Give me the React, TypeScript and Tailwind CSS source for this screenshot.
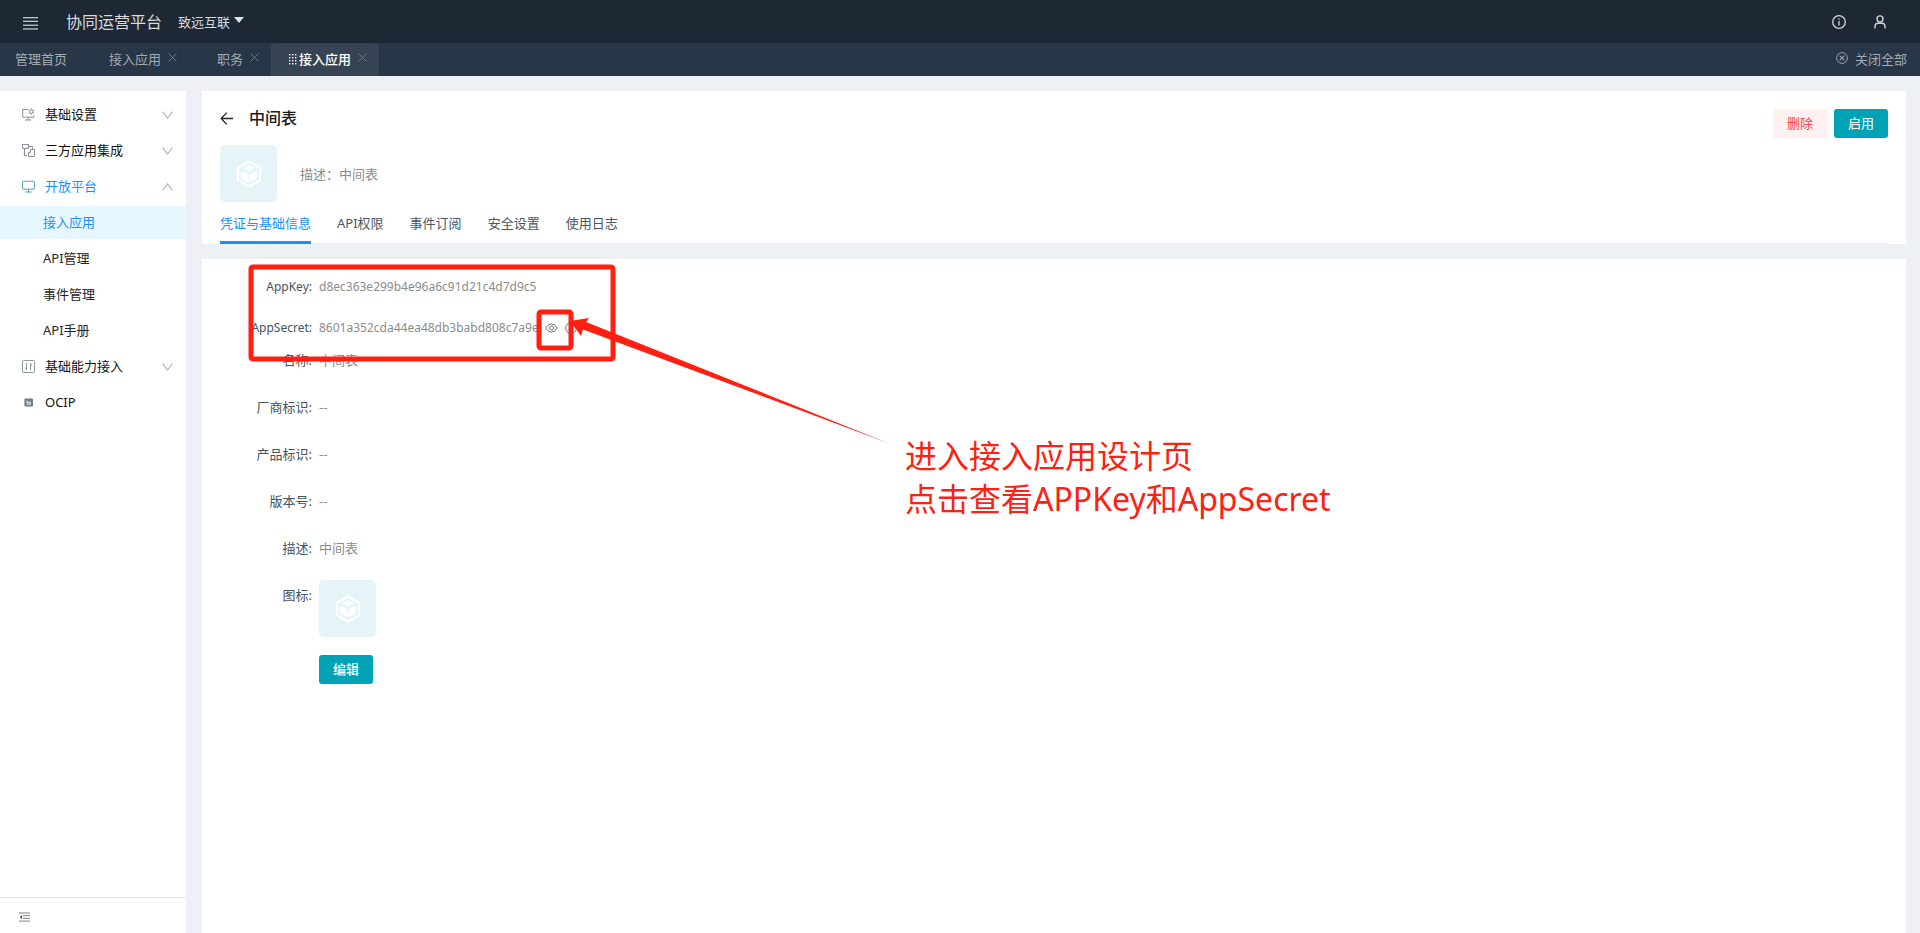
import React from "react";

type IconProps = { className?: string };

const MenuLines = () => (
  <svg viewBox="0 0 15 13" className="h-[13px] w-[15px]" fill="#c5c9ce">
    <rect x="0" y="0" width="15" height="1.3" />
    <rect x="0" y="3.7" width="15" height="1.3" />
    <rect x="0" y="7.6" width="15" height="1.3" />
    <rect x="0" y="11.3" width="15" height="1.3" />
  </svg>
);

const Close = () => (
  <svg viewBox="0 0 9 9" className="h-[9px] w-[9px]" stroke="#6b7682" fill="none">
    <path d="M0.5 0.5 8.5 8.5M8.5 0.5 0.5 8.5" />
  </svg>
);

const Dots = () => (
  <svg viewBox="0 0 8 11" className="h-[11px] w-2" fill="#ffffff">
    {[0, 3, 6, 9].map((y) => (
      <React.Fragment key={y}>
        <rect x="0" y={y} width="1.4" height="1.4" />
        <rect x="3" y={y} width="1.4" height="1.4" />
        <rect x="6" y={y} width="1.4" height="1.4" />
      </React.Fragment>
    ))}
  </svg>
);

const Info = ({ className }: IconProps) => (
  <svg viewBox="0 0 14 14" className={className} fill="none" stroke="currentColor" strokeWidth="1.3">
    <circle cx="7" cy="7" r="6.3" />
    <path d="M7 5.9V10.6" />
    <path d="M7 3.4V4.8" />
  </svg>
);

const User = () => (
  <svg viewBox="0 0 12 14" className="h-[14px] w-3" fill="none" stroke="#d2d4d7" strokeWidth="1.4">
    <circle cx="6" cy="3.9" r="3" />
    <path d="M1 13.6V11.4Q1 8.3 4 8.3H8Q11 8.3 11 11.4V13.6" />
  </svg>
);

const CircleX = () => (
  <svg viewBox="0 0 12 12" className="h-3 w-3" fill="none" stroke="#9aa2ab">
    <circle cx="6" cy="6" r="5.4" />
    <path d="M3.6 3.6 8.4 8.4M8.4 3.6 3.6 8.4" strokeWidth="1.2" />
  </svg>
);

const Chevron = ({ up }: { up?: boolean }) => (
  <svg viewBox="0 0 11 8" className="h-2 w-[11px]" fill="none" stroke="#b3b7bd" strokeWidth="1.2">
    <path d={up ? "M0.6 7.3 5.5 1 10.4 7.3" : "M0.6 0.7 5.5 7 10.4 0.7"} />
  </svg>
);

const iconClass = "h-[13px] w-[13px]";

const SettingsIcon = () => (
  <svg viewBox="0 0 13 13" className={iconClass} fill="none" stroke="#8a8f99">
    <path d="M6 1.5H0.7V9.2H11.8V7.6M6.2 9.2V11.8M3 12H9.5" />
    <circle cx="9.3" cy="3.6" r="1.8" />
    <path d="M9.3 0.4V1.8M9.3 5.4V6.8M6.5 2 7.7 2.7M10.9 4.5 12.1 5.2M6.5 5.2 7.7 4.5M10.9 2.7 12.1 2" />
  </svg>
);

const IntegrationIcon = () => (
  <svg viewBox="0 0 13 13" className={iconClass} fill="none" stroke="#8a8f99">
    <path d="M0.5 0.5H6.5V4.5H0.5ZM6.5 2.5H10.5V5M2.5 4.5V11.5H5M1.5 10H3.5" />
    <path d="M6.5 12.5V8.5H8.5V5.5H12.5V12.5Z" />
  </svg>
);

const MonitorIcon = () => (
  <svg viewBox="0 0 13 13" className={iconClass} fill="none" stroke="#4f9fb8">
    <rect x="0.6" y="1.2" width="11.8" height="8" rx="0.6" />
    <path d="M6.5 9.2V11.8M3.2 12H9.8" />
  </svg>
);

const SlidersIcon = () => (
  <svg viewBox="0 0 13 13" className={iconClass} fill="none" stroke="#9298a1">
    <rect x="0.5" y="0.5" width="12" height="12" rx="0.8" />
    <path d="M4.5 3V9.6M3.2 7.6 4.5 9.6M8.5 10V3.4M8.5 3.4 9.9 5.6" />
  </svg>
);

const OcipIcon = () => (
  <svg viewBox="0 0 13 13" className={iconClass}>
    <rect x="2.4" y="2.4" width="8.6" height="8.2" rx="1" fill="#727b87" />
    <path d="M5.2 4.6V8.2H8.4V6.2H5.4" fill="none" stroke="#ffffff" strokeWidth="0.9" />
  </svg>
);

const CollapseIcon = () => (
  <svg viewBox="0 0 11 10" className="h-[10px] w-[11px]" fill="none" stroke="#85858a">
    <path d="M0 1H11M4 3.7H11M4 6.4H11M0 9.1H11" />
    <path d="M3 3.2V6.9L0.8 5Z" fill="#3f4650" stroke="none" />
  </svg>
);

const CubeTile = () => (
  <div className="flex h-[57px] w-[57px] items-center justify-center rounded-[5px] bg-[#e4f4f7]">
    <svg viewBox="0 0 26 28" className="h-7 w-[26px]">
      <path d="M13 1.5 24 7.8V20.2L13 26.5 2 20.2V7.8Z" fill="none" stroke="#ffffff" strokeWidth="2.2" strokeLinejoin="round" />
      <path d="M13 5.4 17.8 8.3 13 11.2 8.2 8.3Z" fill="#ffffff" stroke="#ffffff" strokeLinejoin="round" />
      <path d="M5.4 11 12.2 14.4V21.8L5.4 18.4Z" fill="#ffffff" stroke="#ffffff" strokeWidth="0.6" strokeLinejoin="round" />
      <path d="M20.6 11 13.8 14.4V21.8L20.6 18.4Z" fill="#ffffff" stroke="#ffffff" strokeWidth="0.6" strokeLinejoin="round" />
    </svg>
  </div>
);

const PageTab = ({ label, active }: { label: string; active?: boolean }) => (
  <div className={active ? "flex items-center rounded-t-sm bg-[#354353] pr-3 pl-[18px] text-white" : "flex items-center pr-3 pl-[18px]"}>
    <span className="flex w-[10px] shrink-0 items-center">{active && <Dots />}</span>
    <a href="#" className={active ? "pb-0.5 font-medium" : "pb-0.5"}>{label}</a>
    <button type="button" aria-label="关闭" className="ml-[7px] pb-1">
      <Close />
    </button>
  </div>
);

const MenuItem = ({ icon, label, open, leaf }: { icon: React.ReactNode; label: string; open?: boolean; leaf?: boolean }) => (
  <a href="#" className={open ? "flex h-[33px] items-center pr-[13px] pl-[22px] text-[#1890ff]" : "flex h-[33px] items-center pr-[13px] pl-[22px] text-[#111111]"}>
    {icon}
    <span className="ml-[10px] flex-1 pb-0.5">{label}</span>
    {!leaf && <Chevron up={open} />}
  </a>
);

const SubItem = ({ label, active }: { label: string; active?: boolean }) => (
  <a href="#" className={active ? "flex h-[33px] items-center bg-[#e6f7ff] pb-0.5 pl-[43px] text-[#1890ff]" : "flex h-[33px] items-center pb-0.5 pl-[43px] text-[#262626]"}>
    {label}
  </a>
);

const Field = ({ label, gap, small, children }: { label: string; gap: string; small?: boolean; children: React.ReactNode }) => (
  <div className={"flex items-start " + gap}>
    <dt className={"flex h-[29px] w-[117px] shrink-0 items-center justify-end pr-[7px] text-[#46525f] " + (small ? "text-xs" : "")}>{label}:</dt>
    <dd className={"flex min-h-[29px] items-center text-[#8c8c8c] " + (small ? "text-xs" : "")}>{children}</dd>
  </div>
);

const tabs = ["凭证与基础信息", "API权限", "事件订阅", "安全设置", "使用日志"];

export default function App() {
  return (
    <div className="relative flex min-h-screen flex-col overflow-hidden bg-[#edf1f5] font-['Noto_Sans','Noto_Sans_CJK_SC',sans-serif] text-[13px] leading-5">
      <header className="flex h-[43px] items-center bg-[#1d2834] pr-[34px] pl-[23px] text-[#d8dbde]">
        <button type="button" aria-label="菜单" className="pt-[3px]">
          <MenuLines />
        </button>
        <h1 className="ml-7 text-base">协同运营平台</h1>
        <button type="button" className="ml-4 flex items-center gap-1">
          致远互联
          <svg viewBox="0 0 10 6" className="mb-1 h-[6px] w-[10px]" fill="#e0e2e4">
            <path d="M0 0H10L5 6Z" />
          </svg>
        </button>
        <div className="ml-auto flex items-center gap-7">
          <button type="button" aria-label="信息">
            <Info className="h-[14px] w-[14px] text-[#d2d4d7]" />
          </button>
          <button type="button" aria-label="用户">
            <User />
          </button>
        </div>
      </header>

      <nav className="flex h-[33px] items-stretch bg-[#283747] pr-[13px] text-[#a3abb4]">
        <a href="#" className="flex items-center pr-[14px] pb-0.5 pl-[15px]">管理首页</a>
        <PageTab label="接入应用" />
        <PageTab label="职务" />
        <PageTab label="接入应用" active />
        <button type="button" className="ml-auto flex items-center gap-[7px]">
          <span className="pb-1">
            <CircleX />
          </span>
          <span className="pb-0.5">关闭全部</span>
        </button>
      </nav>

      <div className="flex flex-1 gap-4 pt-[15px]">
        <aside className="flex w-[186px] shrink-0 flex-col bg-white">
          <nav className="flex flex-1 flex-col gap-[3px] pt-[7px]">
            <MenuItem icon={<SettingsIcon />} label="基础设置" />
            <MenuItem icon={<IntegrationIcon />} label="三方应用集成" />
            <MenuItem icon={<MonitorIcon />} label="开放平台" open />
            <SubItem label="接入应用" active />
            <SubItem label="API管理" />
            <SubItem label="事件管理" />
            <SubItem label="API手册" />
            <MenuItem icon={<SlidersIcon />} label="基础能力接入" />
            <MenuItem icon={<OcipIcon />} label="OCIP" leaf />
          </nav>
          <div className="flex h-9 items-center border-t border-[#e2e2e2] pt-0.5 pl-[19px]">
            <button type="button" aria-label="收起">
              <CollapseIcon />
            </button>
          </div>
        </aside>

        <main className="mr-[14px] flex flex-1 flex-col gap-[15px]">
          <section className="bg-white px-[18px]">
            <div className="flex items-start justify-between">
              <div className="flex h-[54px] items-center">
                <button type="button" aria-label="返回">
                  <svg viewBox="0 0 13 13" className="h-[13px] w-[13px]" fill="none" stroke="#262626" strokeWidth="1.3">
                    <path d="M13 6.5H1.2M6.8 0.6 1.2 6.5 6.8 12.4" />
                  </svg>
                </button>
                <h2 className="ml-4 text-base font-medium text-[#1a1a1a]">中间表</h2>
              </div>
              <div className="flex gap-[7px] pt-[18px]">
                <button type="button" className="h-[29px] w-[54px] rounded-[3px] bg-[#fff1f0] pb-0.5 text-[#f5464e]">删除</button>
                <button type="button" className="h-[29px] w-[54px] rounded-[3px] bg-[#00a2b6] pb-0.5 text-white">启用</button>
              </div>
            </div>
            <div className="flex items-center gap-[23px]">
              <CubeTile />
              <p className="text-[#8c8c8c]">描述：中间表</p>
            </div>
            <div className="flex h-[42px] gap-[26px] border-b border-[#edf1f5] pt-[11px] text-[#4b5663]">
              {tabs.map((t, i) => (
                <a key={t} href="#" className={i === 0 ? "h-[31px] border-b-3 border-[#1890ff] text-[#1890ff]" : "h-[31px]"}>
                  {t}
                </a>
              ))}
            </div>
          </section>

          <section className="flex-1 bg-white pt-[13px]">
            <dl>
              <Field label="AppKey" gap="mb-3" small>
                d8ec363e299b4e96a6c91d21c4d7d9c5
              </Field>
              <Field label="AppSecret" gap="mb-[3px]" small>
                8601a352cda44ea48db3babd808c7a9e
                <button type="button" aria-label="查看" className="ml-[6px]">
                  <svg viewBox="0 0 13 10" className="h-[10px] w-[13px]" fill="none" stroke="#6f7276">
                    <path d="M0.6 5Q3 0.9 6.5 0.9T12.4 5Q10 9.1 6.5 9.1T0.6 5Z" />
                    <circle cx="6.5" cy="5" r="2" />
                  </svg>
                </button>
                <button type="button" aria-label="说明" className="ml-[7px]">
                  <Info className="h-3 w-3 text-[#8c8c8c]" />
                </button>
              </Field>
              <Field label="名称" gap="mb-[18px]">中间表</Field>
              <Field label="厂商标识" gap="mb-[18px]">--</Field>
              <Field label="产品标识" gap="mb-[18px]">--</Field>
              <Field label="版本号" gap="mb-[18px]">--</Field>
              <Field label="描述" gap="mb-[18px]">中间表</Field>
              <Field label="图标" gap="mb-[18px]">
                <CubeTile />
              </Field>
            </dl>
            <button type="button" className="ml-[117px] h-[29px] w-[54px] rounded-[3px] bg-[#00a2b6] pb-0.5 font-medium text-white">编辑</button>
          </section>
        </main>
      </div>

      <svg viewBox="0 0 660 200" className="pointer-events-none absolute top-[261px] left-[240px] h-[200px] w-[660px]" fill="none" stroke="#ff2012" strokeWidth="5">
        <rect x="11" y="6" width="362" height="92" rx="2" />
        <rect x="299" y="51" width="32" height="36" rx="2" />
        <path d="M330 60 349 57 346 61 648 182 343 68.5 341 75Z" fill="#ff2012" stroke="none" />
      </svg>
      <p className="pointer-events-none absolute top-[434px] left-[905px] text-[32px] leading-[43px] text-[#ff2012]">
        进入接入应用设计页
        <br />
        点击查看APPKey和AppSecret
      </p>
    </div>
  );
}
